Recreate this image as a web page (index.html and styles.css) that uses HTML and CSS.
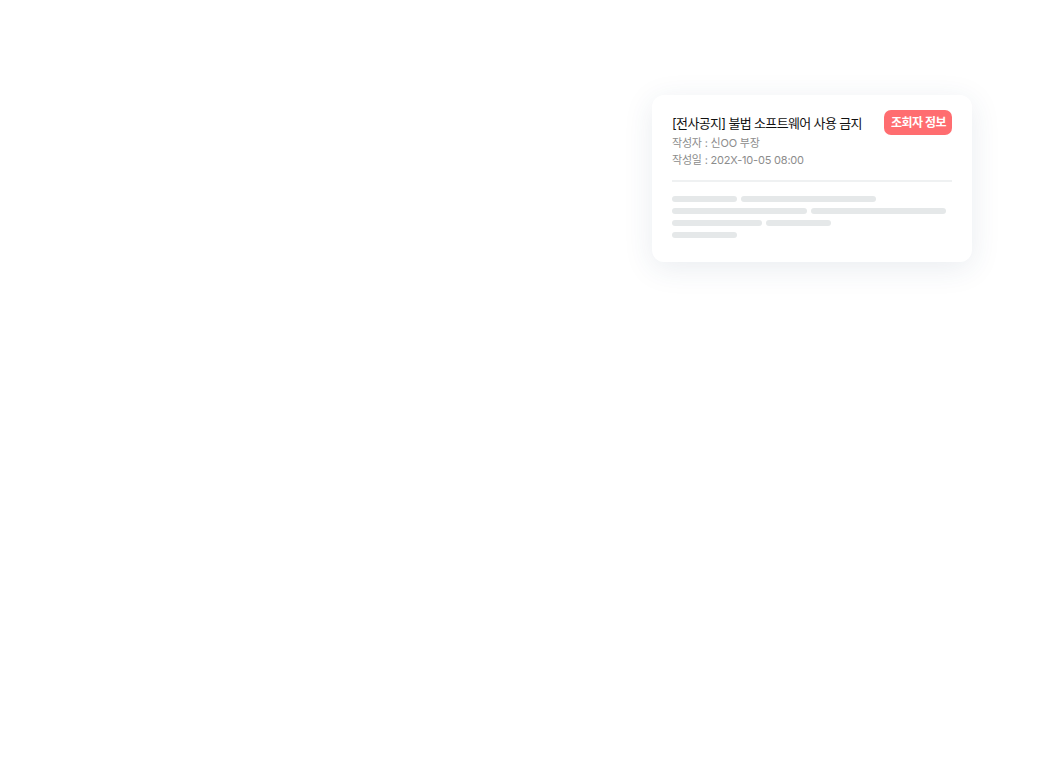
FILE: index.html
```html
<!DOCTYPE html>
<html lang="ko">

<head>
    <meta charset="UTF-8">
    <meta name="viewport" content="width=device-width, initial-scale=1.0">
    <title>공지</title>
    <link rel="stylesheet" href="styles.css">
</head>

<body>
    <div class="stage">
        <div class="notice-card">
            <div class="notice-head">
                <div class="notice-title">[전사공지] 불법 소프트웨어 사용 금지</div>
                <span class="viewer-badge">조회자 정보</span>
            </div>
            <div class="notice-meta">
                <div>작성자 : 신OO 부장</div>
                <div>작성일 : 202X-10-05 08:00</div>
            </div>
            <div class="divider"></div>
            <div class="skeleton">
                <div class="sk-row"><span class="bar w65"></span><span class="bar w135"></span></div>
                <div class="sk-row"><span class="bar w135"></span><span class="bar w135"></span></div>
                <div class="sk-row"><span class="bar w90"></span><span class="bar w65"></span></div>
                <div class="sk-row"><span class="bar w65"></span></div>
            </div>
        </div>
    </div>
</body>

</html>
```

FILE: styles.css
```css
body,
html {
    margin: 0;
    height: 100%;
    background: #fff;
    font-family: Inter, "Noto Sans CJK KR", sans-serif;
}

.stage {
    display: flex;
    justify-content: flex-end;
    padding: 95px 65px 0 0;
}

.notice-card {
    width: 320px;
    box-sizing: border-box;
    padding: 15px 20px 24px;
    background: #fff;
    border-radius: 12px;
    box-shadow: 0 6px 30px rgba(40, 70, 110, 0.10);
}

.notice-head {
    display: flex;
    justify-content: space-between;
    align-items: center;
    height: 25px;
}

.notice-title {
    font-size: 13px;
    font-weight: 400;
    color: #111;
    letter-spacing: -0.65px;
    padding-bottom: 1px;
}

.viewer-badge {
    height: 25px;
    line-height: 25px;
    padding: 0 6px 0 7px;
    border-radius: 7px;
    background: #ff6d70;
    color: #fff;
    font-size: 12px;
    font-weight: 700;
    letter-spacing: -0.5px;
}

.notice-meta {
    margin-top: 0;
    font-size: 11px;
    line-height: 17px;
    color: #8c8c8c;
    letter-spacing: -0.2px;
}

.divider {
    height: 2px;
    margin-top: 11px;
    background: #eff1f2;
}

.skeleton {
    margin-top: 14px;
    display: flex;
    flex-direction: column;
    gap: 6px;
}

.sk-row {
    display: flex;
    gap: 4px;
}

.bar {
    height: 6px;
    border-radius: 3px;
    background: #e5e8e9;
}

.w65 {
    width: 65px;
}

.w90 {
    width: 90px;
}

.w135 {
    width: 135px;
}
```
